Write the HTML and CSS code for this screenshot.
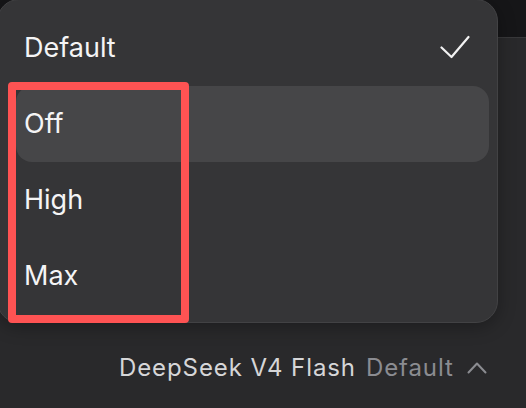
FILE: index.html
```html
<!DOCTYPE html>
<html>
<head>
<meta charset="utf-8">
<link rel="stylesheet" href="styles.css">
</head>
<body>
<div class="app">
  <div class="topbar"></div>
  <div class="panel">
    <div class="model-row">
      <span class="model-name">DeepSeek V4 Flash</span>
      <span class="model-mode">Default</span>
      <svg class="chevron" width="20" height="14" viewBox="0 0 20 14"><path d="M1.5 12.5 L10 3.5 L18.5 12.5" fill="none" stroke="#8b8c91" stroke-width="2" stroke-linecap="round" stroke-linejoin="round"/></svg>
    </div>
  </div>
  <div class="menu">
    <div class="item">
      <span>Default</span>
      <svg class="check" width="30" height="24" viewBox="0 0 30 24"><path d="M1.5 12.5 L11.5 22 L28.5 2" fill="none" stroke="#f2f2f2" stroke-width="2.2" stroke-linecap="round" stroke-linejoin="round"/></svg>
    </div>
    <div class="item hover"><span>Off</span></div>
    <div class="item"><span>High</span></div>
    <div class="item"><span>Max</span></div>
  </div>
  <div class="annot"></div>
</div>
</body>
</html>
```
FILE: styles.css
```css
html, body {
  margin: 0;
  padding: 0;
  background: #161618;
}
.app {
  position: relative;
  width: 526px;
  height: 408px;
  overflow: hidden;
  display: flex;
  flex-direction: column;
  font-family: Inter, "Noto Sans", sans-serif;
}
.topbar {
  height: 37px;
  background: #161618;
  flex: none;
}
.panel {
  flex: 1;
  background: #29292b;
  border-top: 1px solid #38383a;
  display: flex;
  flex-direction: column;
  justify-content: flex-end;
}
.model-row {
  height: 40px;
  margin-bottom: 20px;
  padding-left: 119px;
  display: flex;
  align-items: center;
  font-size: 24px;
  letter-spacing: 0.9px;
  line-height: 40px;
  gap: 10px;
}
.model-name { color: #d6d6d8; }
.model-mode { color: #8b8c91; }
.chevron { margin-left: 3px; margin-top: -3px; }
.menu {
  position: absolute;
  left: -3px;
  top: -1px;
  width: 501px;
  height: 324px;
  box-sizing: border-box;
  background: #353537;
  border: 1px solid #424244;
  border-radius: 22px;
  padding: 10px 8px 8px 18px;
  box-shadow: 0 4px 18px rgba(0,0,0,0.3);
}
.item {
  height: 76px;
  display: flex;
  align-items: center;
  justify-content: space-between;
  padding: 0 19px 0 8px;
  border-radius: 16px;
  color: #f4f4f5;
  font-size: 27px;
  line-height: 76px;
}
.item.hover { background: #464648; }
.check { margin-top: -2px; }
.annot {
  position: absolute;
  left: 8px;
  top: 82px;
  width: 181px;
  height: 241px;
  box-sizing: border-box;
  border: 8px solid #fe5353;
  border-radius: 4px;
}
```
